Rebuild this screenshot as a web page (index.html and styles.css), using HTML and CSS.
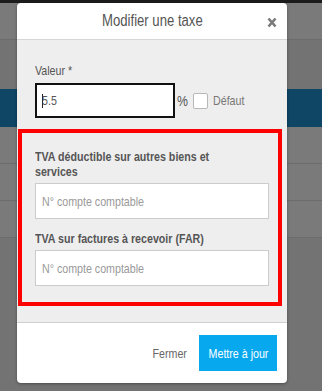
FILE: index.html
```html
<!DOCTYPE html>
<html lang="fr">
<head>
<meta charset="utf-8">
<title>Modifier une taxe</title>
<link rel="stylesheet" href="styles.css">
</head>
<body>
<div class="page">
  <div class="bg-top"></div>
  <div class="bg-row bg-light"></div>
  <div class="bg-row bg-dark tall"></div>
  <div class="bg-row bg-blue"></div>
  <div class="bg-row bg-light"></div>
  <div class="bg-row bg-light"></div>
  <div class="bg-row bg-light"></div>
  <div class="bg-rest"></div>

  <div class="modal">
    <div class="modal-header">
      <h4 class="modal-title"><span class="nx nx-c">Modifier une taxe</span></h4>
      <span class="close" aria-label="Fermer">
        <svg width="10" height="11" viewBox="0 0 10 11"><path d="M1.5 1.5 L8.5 9.5 M8.5 1.5 L1.5 9.5" stroke="#7a7a7a" stroke-width="2.6" stroke-linecap="butt"/></svg>
      </span>
    </div>
    <div class="modal-body">
      <label class="label"><span class="nx">Valeur *</span></label>
      <div class="value-row">
        <div class="input input-focus"><span class="caret"></span><span class="nx">5.5</span></div>
        <span class="percent"><span class="nx">%</span></span>
        <span class="checkbox"></span>
        <span class="check-label"><span class="nx">Défaut</span></span>
      </div>
      <div class="accounts">
        <label class="label bold"><span class="nx wrap">TVA déductible sur autres biens et services</span></label>
        <div class="input placeholder"><span class="nx">N° compte comptable</span></div>
        <label class="label bold second"><span class="nx">TVA sur factures à recevoir (FAR)</span></label>
        <div class="input placeholder"><span class="nx">N° compte comptable</span></div>
      </div>
    </div>
    <div class="modal-footer">
      <span class="btn-link"><span class="nx nx-r">Fermer</span></span>
      <span class="btn-primary"><span class="nx nx-c">Mettre à jour</span></span>
    </div>
  </div>
</div>
</body>
</html>
```
FILE: styles.css
```css
* { box-sizing: border-box; }
html, body { margin: 0; padding: 0; }
body {
  font-family: "Liberation Sans", Arial, sans-serif;
  font-size: 13px;
  color: #555;
  width: 322px;
  height: 391px;
  overflow: hidden;
}
.nx {
  display: inline-block;
  transform: scaleX(0.82);
  transform-origin: left center;
  white-space: nowrap;
}
.nx-c { transform-origin: center center; }
.nx-r { transform-origin: right center; }
.nx.wrap { white-space: normal; width: 240px; }

.page { position: relative; width: 322px; height: 391px; display: flex; flex-direction: column; }
.bg-top { height: 3px; background: #1c1c1c; }
.bg-row { height: 37px; border-bottom: 1px solid #6c6c6c; }
.bg-light { background: #7a7a7a; }
.bg-dark { background: #737373; }
.bg-row.tall { height: 49px; border-bottom: none; }
.bg-blue { background: #0f4565; height: 38px; border-bottom: none; }
.bg-rest { flex: 1; background: #737373; }

.modal {
  position: absolute;
  left: 17px;
  top: 3px;
  width: 270px;
  height: 380px;
  background: #fff;
  border-radius: 4px;
  display: flex;
  flex-direction: column;
  overflow: hidden;
  box-shadow: 0 1px 3px rgba(0,0,0,0.35);
}
.modal-header {
  position: relative;
  height: 37px;
  border-bottom: 1px solid #d6d6d6;
  display: flex;
  align-items: center;
  justify-content: center;
}
.modal-title {
  margin: 0;
  font-size: 16px;
  font-weight: normal;
  line-height: 36px;
  color: #555;
}
.close {
  position: absolute;
  right: 10px;
  top: 14px;
  width: 10px;
  height: 11px;
  display: block;
}
.close svg { display: block; }

.modal-body {
  flex: 1;
  background: #eeeeee;
  padding: 23px 18px 0 18px;
}
.label { display: block; line-height: 15px; font-size: 13px; color: #555; }
.bold { font-weight: bold; }
.value-row {
  margin-top: 5px;
  display: flex;
  align-items: center;
  height: 35px;
}
.input {
  background: #fff;
  border: 1px solid #cccccc;
  height: 36px;
  display: flex;
  align-items: center;
  padding-left: 6px;
  font-size: 13px;
}
.input-focus {
  width: 140px;
  height: 35px;
  border: 2px solid #111;
  padding-left: 5px;
  color: #555;
  position: relative;
}
.caret {
  width: 1px;
  height: 14px;
  background: #222;
  margin-right: -1px;
}
.percent { margin-left: 2px; font-size: 15px; color: #555; width: 11px; }
.checkbox {
  margin-left: 5px;
  width: 15px;
  height: 16px;
  background: #fff;
  border: 1px solid #b8b8b8;
  border-radius: 2px;
}
.check-label { margin-left: 5px; color: #777; }

.accounts {
  margin-top: 11px;
  margin-left: -17px;
  width: 264px;
  border: 4px solid #ff0000;
  padding: 16px 9px 16px 13px;
}
.accounts .input { margin-top: 4px; }
.accounts .second { margin-top: 12px; }
.placeholder { color: #999; }

.modal-footer {
  height: 61px;
  border-top: 1px solid #cfcfcf;
  display: flex;
  align-items: center;
  justify-content: flex-end;
  gap: 12px;
  padding: 0 10px 0 0;
}
.btn-link { color: #666; font-size: 13px; }
.btn-primary {
  width: 78px;
  height: 36px;
  background: #08a8ef;
  color: #fff;
  display: flex;
  align-items: center;
  justify-content: center;
  font-size: 13px;
}
```
